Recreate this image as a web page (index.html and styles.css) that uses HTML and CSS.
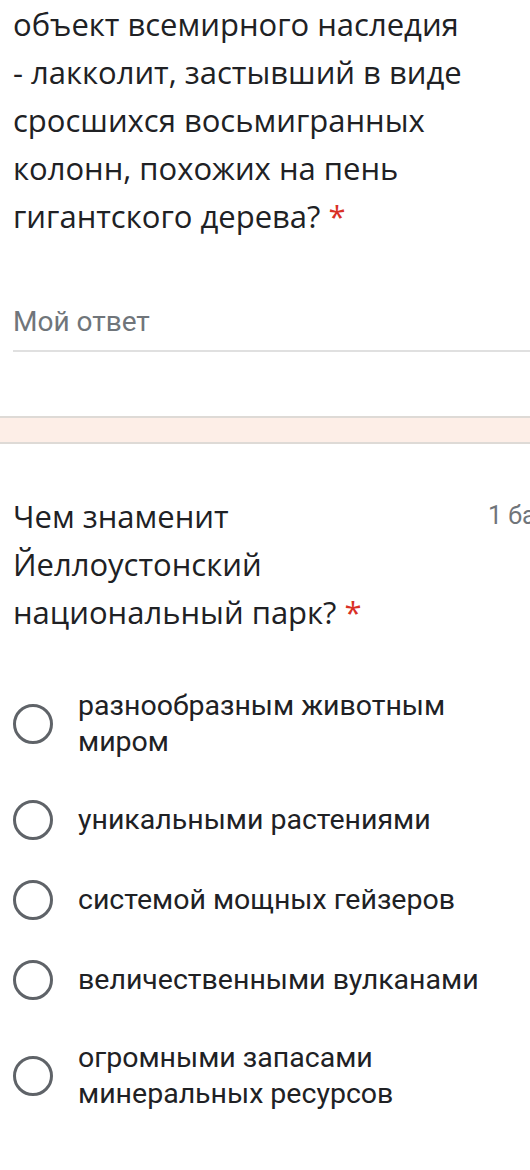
FILE: index.html
```html
<!DOCTYPE html>
<html lang="ru">
<head>
<meta charset="utf-8">
<link rel="stylesheet" href="styles.css">
</head>
<body>
<div class="page">
  <section class="question q1">
    <div class="title">объект всемирного наследия<br>- лакколит, застывший в виде<br>сросшихся восьмигранных<br>колонн, похожих на пень<br>гигантского дерева? <span class="req">*</span></div>
    <div class="answer">
      <div class="answer-text">Мой ответ</div>
    </div>
  </section>
  <div class="band"></div>
  <section class="question q2">
    <div class="head">
      <div class="title">Чем знаменит<br>Йеллоустонский<br>национальный парк? <span class="req">*</span></div>
      <div class="points">1 балл</div>
    </div>
    <ul class="options">
      <li class="option"><span class="radio"></span><span class="label">разнообразным животным<br>миром</span></li>
      <li class="option"><span class="radio"></span><span class="label">уникальными растениями</span></li>
      <li class="option"><span class="radio"></span><span class="label">системой мощных гейзеров</span></li>
      <li class="option"><span class="radio"></span><span class="label">величественными вулканами</span></li>
      <li class="option"><span class="radio"></span><span class="label">огромными запасами<br>минеральных ресурсов</span></li>
    </ul>
  </section>
</div>
</body>
</html>
```

FILE: styles.css
```css
html, body {
  margin: 0;
  padding: 0;
  background: #ffffff;
  overflow: hidden;
}

.page {
  width: 530px;
  overflow: hidden;
}

.title {
  font-family: "Open Sans", "Noto Sans", sans-serif;
  font-size: 31px;
  line-height: 48px;
  color: #202124;
  white-space: nowrap;
}

.req {
  color: #d93025;
}

.q1 {
  padding: 0 0 0 13px;
}

.answer {
  margin-top: 62px;
  padding-bottom: 8px;
  border-bottom: 2px solid #e0e0e0;
}

.answer-text {
  font-family: Roboto, "Liberation Sans", sans-serif;
  font-size: 28px;
  line-height: 40px;
  color: #70757a;
}

.band {
  margin-top: 64px;
  height: 24px;
  background: #fdeee7;
  border-top: 2px solid #dedad6;
  border-bottom: 2px solid #dedad6;
}

.q2 {
  padding: 48px 0 0 13px;
}

.head {
  display: flex;
  align-items: flex-start;
}

.head .title {
  width: 475px;
  flex: none;
}

.points {
  flex: none;
  font-family: Roboto, "Liberation Sans", sans-serif;
  font-size: 25px;
  line-height: 48px;
  color: #70757a;
  white-space: nowrap;
}

.options {
  list-style: none;
  margin: 52px 0 0;
  padding: 0;
  display: flex;
  flex-direction: column;
  gap: 40px;
}

.option {
  display: flex;
  align-items: center;
  gap: 25px;
}

.radio {
  flex: none;
  width: 34px;
  height: 34px;
  border: 3px solid #5f6368;
  border-radius: 50%;
}

.label {
  font-family: Roboto, "Liberation Sans", sans-serif;
  font-size: 28.5px;
  line-height: 36px;
  color: #202124;
  white-space: nowrap;
}
```
